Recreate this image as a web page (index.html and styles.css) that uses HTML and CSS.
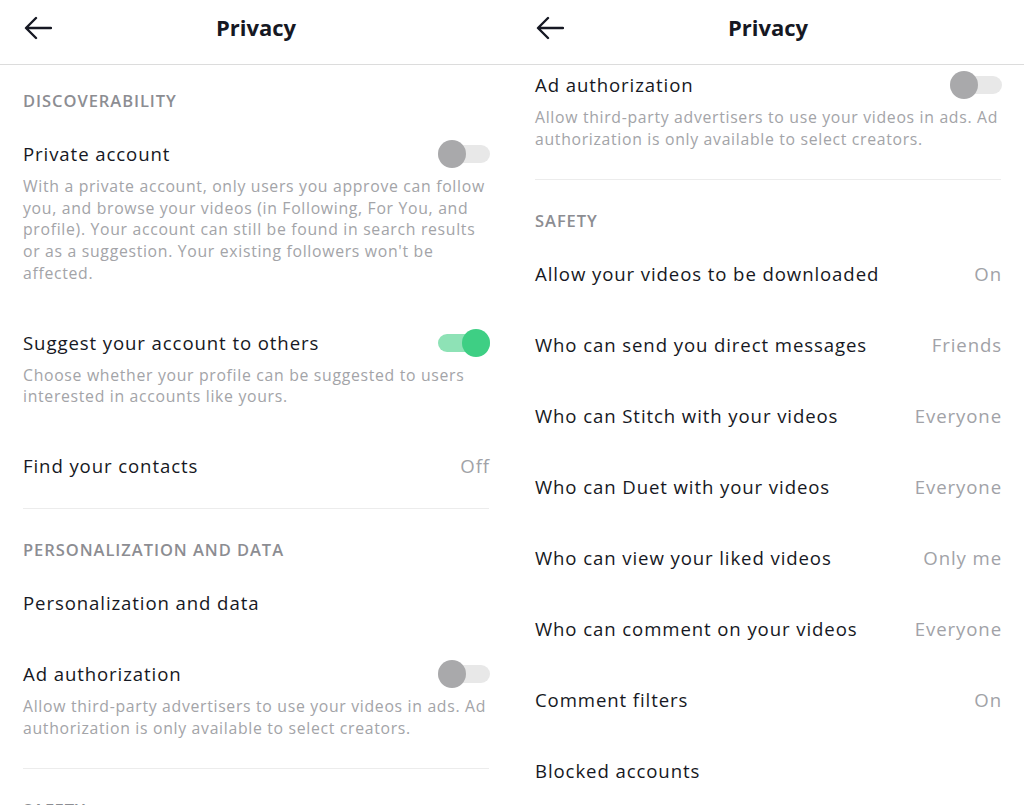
FILE: index.html
```html
<!DOCTYPE html>
<html lang="en">
<head>
<meta charset="utf-8">
<title>Privacy</title>
<link rel="stylesheet" href="styles.css">
</head>
<body>
<div class="screens">
  <section class="screen">
    <header class="bar">
      <svg class="back" width="28" height="24" viewBox="0 0 28 24"><path d="M27 12H3M12 2L2 12l10 10" fill="none" stroke="#161823" stroke-width="2.4" stroke-linecap="round" stroke-linejoin="round"/></svg>
      <h1 class="title">Privacy</h1>
    </header>
    <div class="content">
      <div class="label">DISCOVERABILITY</div>
      <div class="item">
        <div class="row"><span class="name">Private account</span><span class="toggle"></span></div>
        <p class="desc">With a private account, only users you approve can follow you, and browse your videos (in Following, For You, and profile). Your account can still be found in search results or as a suggestion. Your existing followers won't be affected.</p>
      </div>
      <div class="item">
        <div class="row"><span class="name">Suggest your account to others</span><span class="toggle on"></span></div>
        <p class="desc">Choose whether your profile can be suggested to users interested in accounts like yours.</p>
      </div>
      <div class="item">
        <div class="row"><span class="name">Find your contacts</span><span class="value">Off</span></div>
      </div>
      <hr class="divider">
      <div class="label">PERSONALIZATION AND DATA</div>
      <div class="item">
        <div class="row"><span class="name">Personalization and data</span></div>
      </div>
      <div class="item">
        <div class="row"><span class="name">Ad authorization</span><span class="toggle"></span></div>
        <p class="desc">Allow third-party advertisers to use your videos in ads. Ad authorization is only available to select creators.</p>
      </div>
      <hr class="divider">
      <div class="label">SAFETY</div>
    </div>
  </section>
  <section class="screen">
    <header class="bar">
      <svg class="back" width="28" height="24" viewBox="0 0 28 24"><path d="M27 12H3M12 2L2 12l10 10" fill="none" stroke="#161823" stroke-width="2.4" stroke-linecap="round" stroke-linejoin="round"/></svg>
      <h1 class="title">Privacy</h1>
    </header>
    <div class="content">
      <div class="item first">
        <div class="row"><span class="name">Ad authorization</span><span class="toggle"></span></div>
        <p class="desc">Allow third-party advertisers to use your videos in ads. Ad authorization is only available to select creators.</p>
      </div>
      <hr class="divider">
      <div class="label">SAFETY</div>
      <div class="item"><div class="row"><span class="name">Allow your videos to be downloaded</span><span class="value">On</span></div></div>
      <div class="item"><div class="row"><span class="name">Who can send you direct messages</span><span class="value">Friends</span></div></div>
      <div class="item"><div class="row"><span class="name">Who can Stitch with your videos</span><span class="value">Everyone</span></div></div>
      <div class="item"><div class="row"><span class="name">Who can Duet with your videos</span><span class="value">Everyone</span></div></div>
      <div class="item"><div class="row"><span class="name">Who can view your liked videos</span><span class="value">Only me</span></div></div>
      <div class="item"><div class="row"><span class="name">Who can comment on your videos</span><span class="value">Everyone</span></div></div>
      <div class="item"><div class="row"><span class="name">Comment filters</span><span class="value">On</span></div></div>
      <div class="item"><div class="row"><span class="name">Blocked accounts</span></div></div>
    </div>
  </section>
</div>
</body>
</html>
```

FILE: styles.css
```css
html, body {
  margin: 0;
  padding: 0;
  background: #ffffff;
}
body {
  font-family: "Open Sans", "Liberation Sans", sans-serif;
  color: #161823;
  width: 1024px;
  height: 805px;
  overflow: hidden;
}
.screens {
  display: flex;
  width: 1024px;
  height: 805px;
  overflow: hidden;
}
.screen {
  width: 512px;
  flex: 0 0 512px;
  overflow: hidden;
}
.bar {
  height: 64px;
  border-bottom: 1px solid #dcdcdc;
  display: flex;
  align-items: center;
  justify-content: center;
  position: relative;
}
.back {
  position: absolute;
  left: 24px;
  top: 16px;
}
.title {
  margin: 0;
  font-size: 22px;
  font-weight: 700;
  color: #161823;
  line-height: 28px;
  margin-top: -10px;
}
.content {
  padding: 0 23px 0 23px;
}
.label {
  margin-top: 31px;
  font-size: 16.5px;
  line-height: 20px;
  font-weight: 600;
  color: #8c8d92;
  letter-spacing: 0.95px;
}
.content > .label:first-child {
  margin-top: 26px;
}
.item {
  margin-top: 47px;
}
.label + .item {
  margin-top: 31px;
}
.item.first {
  margin-top: 8px;
}
.row {
  display: flex;
  align-items: center;
  justify-content: space-between;
  height: 24px;
}
.name {
  font-size: 18.6px;
  line-height: 24px;
  color: #161823;
  letter-spacing: 0.9px;
}
.value {
  font-size: 18.6px;
  line-height: 24px;
  color: #a1a2a7;
  letter-spacing: 0.9px;
  margin-right: -1px;
}
.desc {
  margin: 10px 0 -1px 0;
  font-size: 15.8px;
  line-height: 21.7px;
  color: #a3a4a8;
  letter-spacing: 0.68px;
}
.divider {
  border: 0;
  border-top: 1px solid #ececec;
  margin: 30px 0 0 0;
  height: 0;
}
.toggle {
  position: relative;
  width: 52px;
  height: 18px;
  border-radius: 9px;
  background: #e8e8e8;
  margin-right: -1px;
}
.toggle::after {
  content: "";
  position: absolute;
  left: 0;
  top: -5px;
  width: 28px;
  height: 28px;
  border-radius: 50%;
  background: #a9a9ab;
}
.toggle.on {
  background: #8ee2b6;
}
.toggle.on::after {
  left: auto;
  right: 0;
  background: #3ecf84;
}
```
